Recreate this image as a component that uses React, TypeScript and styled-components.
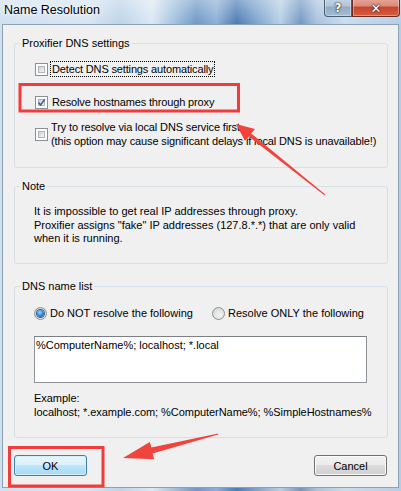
import styled, { createGlobalStyle } from 'styled-components';

const GlobalStyle = createGlobalStyle`
  html, body {
    margin: 0;
    padding: 0;
  }
  body {
    width: 401px;
    height: 491px;
    overflow: hidden;
    font-family: "Liberation Sans", Arial, sans-serif;
    font-size: 11px;
    color: #000;
  }
`;

const Window = styled.div`
  position: relative;
  width: 401px;
  height: 491px;
  box-sizing: border-box;
  padding: 0 2px 3px 2px;
  display: flex;
  flex-direction: column;
  background:
    linear-gradient(to bottom, rgba(255, 255, 255, 0.35), rgba(255, 255, 255, 0) 24px),
    linear-gradient(
      90deg,
      #cfe0ef 0%,
      #d6e5f2 22%,
      #bdd3e9 30%,
      #dbe8f4 38%,
      #9dbddd 44%,
      #6e98c6 49%,
      #8cb0d6 54%,
      #4d7bb3 59%,
      #7ea5cf 64%,
      #b7cfe6 70%,
      #7397c1 75%,
      #a8c3df 79%,
      #c9dcee 86%,
      #b6cde6 100%
    );
`;

const TitleBar = styled.div`
  height: 24px;
  display: flex;
  justify-content: space-between;
  align-items: flex-start;
`;

const Title = styled.span`
  padding-left: 2px;
  line-height: 20px;
  font-size: 12.5px;
  color: #000;
  text-shadow: 0 0 6px rgba(255, 255, 255, 0.95), 0 0 3px rgba(255, 255, 255, 0.9);
`;

const CaptionButtons = styled.div`
  display: flex;
  margin-top: -2px;
  margin-right: -1px;
`;

const CaptionButton = styled.div<{ $close?: boolean }>`
  width: ${(p) => (p.$close ? 48 : 28)}px;
  height: 19px;
  box-sizing: border-box;
  display: flex;
  align-items: center;
  justify-content: center;
  padding-top: 2px;
  border: 1px solid ${(p) => (p.$close ? '#6b2a22' : '#4a5d73')};
  border-top: none;
  border-radius: ${(p) => (p.$close ? '0 0 4px 0' : '0 0 0 4px')};
  background: ${(p) =>
    p.$close
      ? 'linear-gradient(to bottom, #e9a99c 0%, #dc8a78 45%, #c8452f 50%, #d3603f 100%)'
      : 'linear-gradient(to bottom, #c6d6e6 0%, #b0c4d9 45%, #91aac4 50%, #a5bcd3 100%)'};
  box-shadow: inset 0 0 0 1px rgba(255, 255, 255, 0.35);
  color: #fff;
  font-family: "DejaVu Sans", sans-serif;
  font-weight: bold;
  font-size: ${(p) => (p.$close ? 13 : 12)}px;
  line-height: 1;
  text-shadow: 0 0 1px #2a2a2a, 0 0 1px #2a2a2a, 0 0 2px #333;
`;

const Client = styled.div`
  flex: 1;
  background: #f0f0f0;
  border: 1px solid #8ea2b6;
  padding: 11px 10px 0 11px;
  display: flex;
  flex-direction: column;
  white-space: nowrap;
`;

const GroupBox = styled.fieldset<{ $h: number; $top?: number }>`
  margin: ${(p) => p.$top ?? 0}px 0 0 0;
  padding: 0;
  height: ${(p) => p.$h}px;
  box-sizing: border-box;
  min-width: 0;
  border: 1px solid #d5dfe5;
  border-radius: 3px;
`;

const Legend = styled.legend`
  margin-left: 5px;
  padding: 0 2px;
  line-height: 14px;
  font-size: 11px;
`;

const GroupBody = styled.div<{ $pt: number }>`
  padding: ${(p) => p.$pt}px 19px 0 19px;
`;

const CheckRow = styled.div<{ $top?: number }>`
  display: flex;
  align-items: center;
  gap: 3px;
  margin: ${(p) => p.$top ?? 0}px 0 0 1px;
`;

const CheckBox = styled.span`
  position: relative;
  flex: none;
  width: 13px;
  height: 13px;
  box-sizing: border-box;
  border: 1px solid #8e8f8f;
  background: #fff;
  padding: 2px;
  &::before {
    content: '';
    display: block;
    width: 100%;
    height: 100%;
    box-sizing: border-box;
    border: 1px solid #aeb3b9;
    background: linear-gradient(135deg, #cbcfd5 0%, #e6e8eb 60%, #f6f6f6 100%);
  }
  svg {
    position: absolute;
    left: 1px;
    top: 1px;
  }
`;

const CheckLabel = styled.span<{ $focus?: boolean }>`
  line-height: 14px;
  padding: 0 1px;
  letter-spacing: -0.15px;
  outline: ${(p) => (p.$focus ? '1px dotted #000' : 'none')};
`;

const Lines = styled.div`
  line-height: 14px;
  letter-spacing: -0.12px;
`;

const NoteText = styled.div`
  line-height: 13.5px;
`;

const RadioRow = styled.div`
  display: flex;
  align-items: center;
`;

const RadioItem = styled.div<{ $w?: number }>`
  display: flex;
  align-items: center;
  gap: 3px;
  width: ${(p) => (p.$w ? `${p.$w}px` : 'auto')};
  line-height: 15px;
`;

const Radio = styled.span<{ $checked?: boolean }>`
  flex: none;
  width: 13px;
  height: 13px;
  box-sizing: border-box;
  border-radius: 50%;
  border: 1px solid #8e8f8f;
  background: radial-gradient(circle at 60% 65%, #f4f4f4 0%, #d9dbde 70%, #c9ccd0 100%);
  display: flex;
  align-items: center;
  justify-content: center;
  &::after {
    content: '';
    display: ${(p) => (p.$checked ? 'block' : 'none')};
    width: 7px;
    height: 7px;
    border-radius: 50%;
    background: radial-gradient(circle at 40% 35%, #a6dcff 0%, #3d8fd6 45%, #0f4f98 100%);
    box-shadow: 0 0 0 1px #2b5d8e;
  }
`;

const Edit = styled.textarea`
  display: block;
  margin-top: 15px;
  width: 333px;
  height: 47px;
  box-sizing: border-box;
  padding: 1px 1px;
  border: 1px solid #8f9399;
  border-top-color: #7b7f86;
  background: #fff;
  font-family: inherit;
  font-size: 11px;
  line-height: 14px;
  resize: none;
  overflow: hidden;
  color: #000;
`;

const Example = styled.div`
  margin-top: 8px;
  line-height: 14px;
  letter-spacing: -0.05px;
`;

const ButtonBar = styled.div`
  display: flex;
  justify-content: space-between;
  margin-top: 17px;
  padding-right: 1px;
`;

const Button = styled.button<{ $default?: boolean }>`
  width: 73px;
  height: 21px;
  box-sizing: border-box;
  padding: 0;
  border-radius: 3px;
  font-family: inherit;
  font-size: 11px;
  color: #000;
  border: 1px solid ${(p) => (p.$default ? '#3c7fb1' : '#707070')};
  background: ${(p) =>
    p.$default
      ? 'linear-gradient(to bottom, #eaf6fd 0%, #d9f0fc 50%, #bee6fd 50%, #a7d9f5 100%)'
      : 'linear-gradient(to bottom, #f2f2f2 0%, #ebebeb 50%, #dddddd 50%, #cfcfcf 100%)'};
  box-shadow: inset 0 0 0 1px ${(p) => (p.$default ? '#d4eefb' : '#fbfbfb')};
`;

const Annotations = styled.svg`
  position: absolute;
  left: 0;
  top: 0;
  pointer-events: none;
`;

const Check = () => (
  <svg width="9" height="9" viewBox="0 0 9 9">
    <path d="M1.5 4.5 L3.6 7 L7.8 1.2" fill="none" stroke="#4a5f97" strokeWidth="1.6" />
  </svg>
);

export default function App() {
  return (
    <>
      <GlobalStyle />
      <Window>
        <TitleBar>
          <Title>Name Resolution</Title>
          <CaptionButtons>
            <CaptionButton>?</CaptionButton>
            <CaptionButton $close>✕</CaptionButton>
          </CaptionButtons>
        </TitleBar>
        <Client>
          <GroupBox $h={132}>
            <Legend>Proxifier DNS settings</Legend>
            <GroupBody $pt={12}>
              <CheckRow>
                <CheckBox />
                <CheckLabel $focus>Detect DNS settings automatically</CheckLabel>
              </CheckRow>
              <CheckRow $top={19}>
                <CheckBox>
                  <Check />
                </CheckBox>
                <CheckLabel>Resolve hostnames through proxy</CheckLabel>
              </CheckRow>
              <CheckRow $top={11}>
                <CheckBox />
                <Lines>
                  Try to resolve via local DNS service first
                  <br />
                  (this option may cause significant delays if local DNS is unavailable!)
                </Lines>
              </CheckRow>
            </GroupBody>
          </GroupBox>

          <GroupBox $h={85} $top={11}>
            <Legend>Note</Legend>
            <GroupBody $pt={12}>
              <NoteText>
                It is impossible to get real IP addresses through proxy.
                <br />
                Proxifier assigns "fake" IP addresses (127.8.*.*) that are only valid
                <br />
                when it is running.
              </NoteText>
            </GroupBody>
          </GroupBox>

          <GroupBox $h={159} $top={15}>
            <Legend>DNS name list</Legend>
            <GroupBody $pt={13}>
              <RadioRow>
                <RadioItem $w={178}>
                  <Radio $checked />
                  <span>Do NOT resolve the following</span>
                </RadioItem>
                <RadioItem>
                  <Radio />
                  <span>Resolve ONLY the following</span>
                </RadioItem>
              </RadioRow>
              <Edit readOnly value="%ComputerName%; localhost; *.local" />
              <Example>
                Example:
                <br />
                localhost; *.example.com; %ComputerName%; %SimpleHostnames%
              </Example>
            </GroupBody>
          </GroupBox>

          <ButtonBar>
            <Button $default>OK</Button>
            <Button>Cancel</Button>
          </ButtonBar>
        </Client>

        <Annotations width="401" height="491" viewBox="0 0 401 491">
          <rect x="20" y="84.5" width="218.5" height="26.5" fill="none" stroke="#f23b3b" strokeWidth="3" />
          <rect x="9.5" y="447.5" width="93.5" height="38.5" fill="none" stroke="#f23b3b" strokeWidth="3" />
          <polygon
            fill="#f0443c"
            points="236,124 255,129 251.2,133.5 325.3,194.6 324.7,195.4 248.8,136.5 245,141"
          />
          <polygon
            fill="#f0443c"
            points="123,458 149.8,441.9 151.4,447.6 218,433.5 218.2,434.5 152.6,453.4 154.2,459.3"
          />
        </Annotations>
      </Window>
    </>
  );
}
